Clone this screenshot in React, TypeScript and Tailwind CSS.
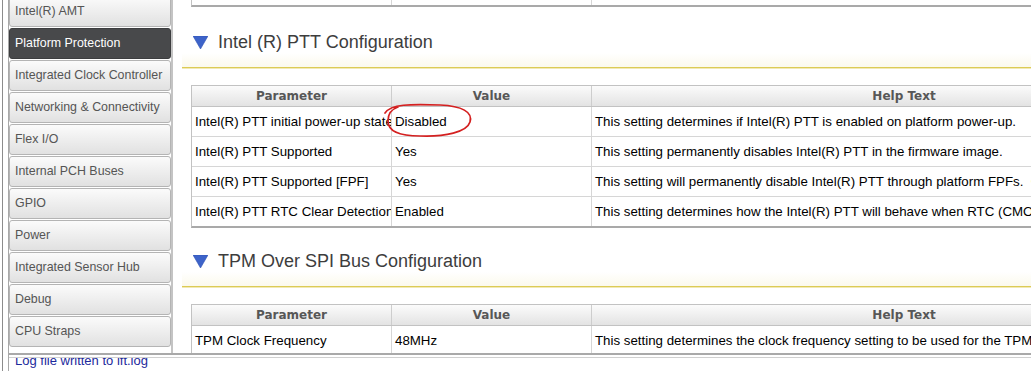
import React from 'react';

type Row = { param: string; value: string; help: string };

const navItems = [
  'Intel(R) AMT',
  'Platform Protection',
  'Integrated Clock Controller',
  'Networking & Connectivity',
  'Flex I/O',
  'Internal PCH Buses',
  'GPIO',
  'Power',
  'Integrated Sensor Hub',
  'Debug',
  'CPU Straps',
];

const pttRows: Row[] = [
  {
    param: 'Intel(R) PTT initial power-up state',
    value: 'Disabled',
    help: 'This setting determines if Intel(R) PTT is enabled on platform power-up.',
  },
  {
    param: 'Intel(R) PTT Supported',
    value: 'Yes',
    help: 'This setting permanently disables Intel(R) PTT in the firmware image.',
  },
  {
    param: 'Intel(R) PTT Supported [FPF]',
    value: 'Yes',
    help: 'This setting will permanently disable Intel(R) PTT through platform FPFs.  Once disabled, it cannot be re-enabled.',
  },
  {
    param: 'Intel(R) PTT RTC Clear Detection',
    value: 'Enabled',
    help: 'This setting determines how the Intel(R) PTT will behave when RTC (CMOS) is cleared.',
  },
];

const tpmRows: Row[] = [
  {
    param: 'TPM Clock Frequency',
    value: '48MHz',
    help: 'This setting determines the clock frequency setting to be used for the TPM.',
  },
];

const ParamTable: React.FC<{ rows: Row[] }> = ({ rows }) => (
  <div className="w-[1026px] border border-[#c2c2c2] border-b-2 border-b-[#a9a9a9]">
    <div className="flex h-[21px] border-b border-[#c2c2c2] bg-linear-to-b from-[#fbfbfb] to-[#e3e3e3] font-['DejaVu_Sans',Verdana,sans-serif] text-[12px] font-bold text-[#575757]">
      <div className="w-[200px] border-r border-[#cdcdcd] flex items-center justify-center">Parameter</div>
      <div className="w-[200px] border-r border-[#cdcdcd] flex items-center justify-center">Value</div>
      <div className="w-[624px] flex items-center justify-center">Help Text</div>
    </div>
    {rows.map((r) => (
      <div
        key={r.param}
        className="flex h-[30px] border-b border-[#d6d6d6] last:border-b-0 last:h-[29px] text-[13.3px] text-black"
      >
        <div className="w-[200px] border-r border-[#d6d6d6] flex items-center pl-[3px] overflow-hidden whitespace-nowrap">
          {r.param}
        </div>
        <div className="w-[200px] border-r border-[#d6d6d6] flex items-center pl-[3px] overflow-hidden whitespace-nowrap">
          {r.value}
        </div>
        <div className="w-[624px] flex items-center pl-[3px] overflow-hidden whitespace-pre">{r.help}</div>
      </div>
    ))}
  </div>
);

const Section: React.FC<{ title: string; rows: Row[]; top: string }> = ({ title, rows, top }) => (
  <div className={top}>
    <div className="ml-[9px]">
      <div className="flex items-center h-[22px] pl-[11px]">
        <svg width="15" height="13" viewBox="0 0 15 13">
          <polygon points="0,0 15,0 7.5,13" fill="#3d63c9" stroke="#2f52b3" strokeWidth="0.6" />
        </svg>
        <span className="ml-[10px] text-[18px] text-[#3d3d3d] whitespace-nowrap">{title}</span>
      </div>
      <div className="h-[14px] bg-linear-to-b from-white to-[#fbf9ec]" />
      <div className="h-[1px] bg-[#dccb55]" />
      <div className="h-[1px] bg-[#f1e9b5]" />
    </div>
    <div className="mt-[16px] ml-[18px]">
      <ParamTable rows={rows} />
    </div>
  </div>
);

const App: React.FC = () => {
  return (
    <div className="relative w-[1031px] h-[371px] overflow-hidden bg-white pl-[2px] font-['Liberation_Sans',Arial,sans-serif]">
      <div className="h-full border-l border-[#8c8c8c] pl-[5px]">
        <div className="h-full border-l border-[#a8a8a8] flex flex-col">
          <div className="flex h-[353px]">
            {/* Sidebar */}
            <div className="w-[164px] shrink-0 border-r-2 border-[#c4c4c4] overflow-hidden">
              <div className="-mt-[4px] flex flex-col gap-[1px]">
                {navItems.map((item) => {
                  const selected = item === 'Platform Protection';
                  return (
                    <div
                      key={item}
                      className={`h-[31px] flex items-center pl-[5px] rounded-[3px] border text-[12.4px] whitespace-nowrap ${
                        selected
                          ? 'bg-[#48494b] border-[#3c3d3f] text-white'
                          : 'bg-linear-to-b from-[#fbfbfb] to-[#e1e1e1] border-[#b4b4b4] text-[#555]'
                      }`}
                    >
                      {item}
                    </div>
                  );
                })}
              </div>
            </div>

            {/* Main */}
            <div className="flex-1 overflow-hidden">
              <div className="ml-[18px] w-[1026px] h-[7px] flex border-x border-b-2 border-[#c2c2c2] border-b-[#a9a9a9]">
                <div className="w-[200px] border-r border-[#d6d6d6]" />
                <div className="w-[200px] border-r border-[#d6d6d6]" />
              </div>
              <Section title="Intel (R) PTT Configuration" rows={pttRows} top="mt-[24px]" />
              <Section title="TPM Over SPI Bus Configuration" rows={tpmRows} top="mt-[22px]" />
            </div>
          </div>

          <div className="h-[2px] bg-[#a9a9a9]" />
          <div className="h-[2px] bg-white" />
          <div className="h-[1px] bg-[#d0d0d0]" />
          <div className="flex-1 overflow-hidden pl-[6px]">
            <div className="-mt-[5px] leading-[16px] text-[13px] text-[#1c2a9c] whitespace-nowrap">
              Log file written to ift.log
            </div>
          </div>
        </div>
      </div>

      {/* hand-drawn annotation */}
      <svg className="absolute left-0 top-0 pointer-events-none" width="1031" height="371">
        <path
          d="M 385 113 C 391 104, 410 104, 440 105 C 462 106, 473 112, 470 122 C 467 132, 445 137, 420 136 C 399 136, 388 131, 388 121 C 388 113, 392 109, 398 107"
          fill="none"
          stroke="#d42020"
          strokeWidth="1.7"
          strokeLinecap="round"
        />
      </svg>
    </div>
  );
};

export default App;
